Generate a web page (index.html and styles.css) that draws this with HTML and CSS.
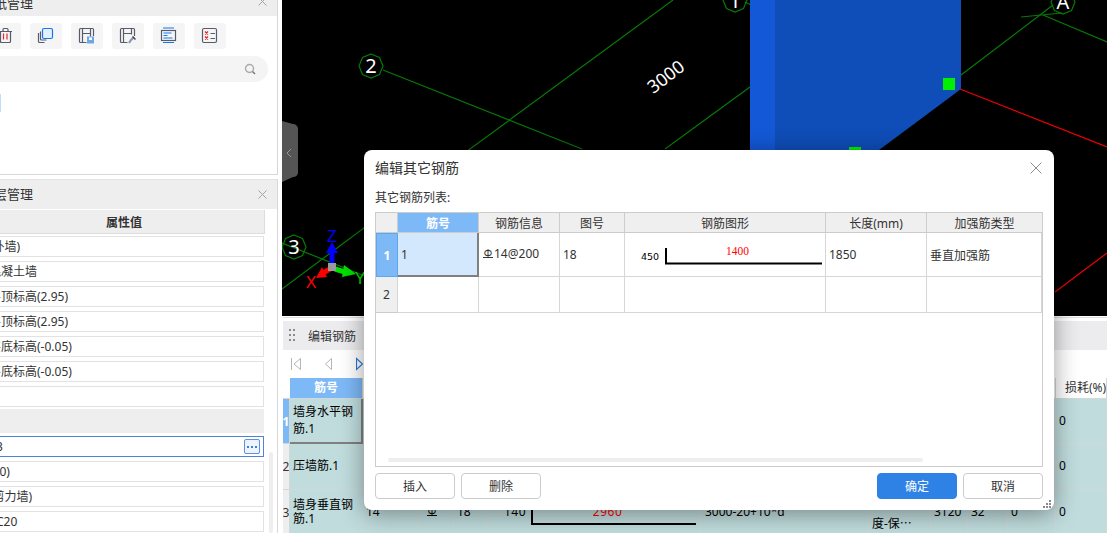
FILE: index.html
```html
<!DOCTYPE html>
<html lang="en">
<head>
    <meta charset="UTF-8">
    <title>编辑其它钢筋</title>
    <link rel="stylesheet" href="styles.css">
</head>
<body>
    <div class="app">
        <div class="side">
            <div class="panel panel-drawings">
                <div class="panel-head">
                    <span class="panel-title">图纸管理</span>
                    <svg class="panel-close" width="9" height="9" viewBox="0 0 9 9"><path d="M.5.500l8 8M8.500.500l-8 8"/></svg>
                </div>
                <div class="tool-row">
                    <div class="tool">
                        <svg width="32" height="26" viewBox="0 0 32 26"><path d="M9 8.500h14M14 8.500V6.500a1 1 0 0 1 1-1h3a1 1 0 0 1 1 1V8.500M11.500 8.500v10a1 1 0 0 0 1 1h8a1 1 0 0 0 1-1v-10" class="ink"/><path d="M14.500 10.500v6M18 10.500v6" class="red"/></svg>
                    </div>
                    <div class="tool">
                        <svg width="32" height="26" viewBox="0 0 32 26"><path d="M8.500 10v8.500a1 1 0 0 0 1 1h5M10.500 8.500v7.500a1 1 0 0 0 1 1h5" class="ink"/><rect x="12.500" y="5.500" width="10" height="10" rx="1.500" class="blue-box"/></svg>
                    </div>
                    <div class="tool">
                        <svg width="32" height="26" viewBox="0 0 32 26"><path d="M15.500 19.500h-6a1 1 0 0 1-1-1v-12a1 1 0 0 1 1-1h12a1 1 0 0 1 1 1V13M11.500 5.500v14M11.500 10.500h8M19.500 5.500v8" class="ink"/><rect x="16" y="13.500" width="7" height="7" fill="#6ea6ea"/><rect x="18" y="14.500" width="3" height="2.500" fill="#fff"/></svg>
                    </div>
                    <div class="tool">
                        <svg width="32" height="26" viewBox="0 0 32 26"><path d="M15.500 19.500h-6a1 1 0 0 1-1-1v-12a1 1 0 0 1 1-1h12a1 1 0 0 1 1 1V13M11.500 5.500v14M11.500 10.500h8M19.500 5.500v6" class="ink"/><path d="M22 14l-3 3-2 3" stroke="#8f98ab" stroke-width="2.200" fill="none"/><path d="M20.500 13.500l3 3" stroke="#444b5c" stroke-width="1.500"/></svg>
                    </div>
                    <div class="tool">
                        <svg width="32" height="26" viewBox="0 0 32 26"><rect x="8.500" y="7.500" width="14" height="10" class="ink"/><path d="M10 5h11M10 19.500h11M10.500 10h8M10.500 12.500h4M10.500 15h9" stroke="#1677ee" fill="none"/></svg>
                    </div>
                    <div class="tool">
                        <svg width="32" height="26" viewBox="0 0 32 26"><rect x="8.500" y="5.500" width="14" height="14" rx="1.500" class="ink"/><path d="M11 8.500l3 3M14 8.500l-3 3M11 13.500l3 3M14 13.500l-3 3" class="red"/><path d="M16.500 10.500h4.500M16.500 15.500h4.500" class="ink"/></svg>
                    </div>
                </div>
                <div class="search">
                    <svg width="12" height="12" viewBox="0 0 12 12"><circle cx="5.500" cy="5.500" r="4" fill="none" stroke="#aaa" stroke-width="1.400"/><path d="M8.500 8.500l2.500 2.500" stroke="#777" stroke-width="1.400"/></svg>
                </div>
                <div class="list-mark"></div>
            </div>

            <div class="panel panel-props">
                <div class="panel-head panel-head-tall">
                    <span class="panel-title">图层管理</span>
                    <svg class="panel-close" width="9" height="9" viewBox="0 0 9 9"><path d="M.5.500l8 8M8.500.500l-8 8"/></svg>
                </div>
                <div class="prop-head">属性值</div>
                <div class="prop-list">
                    <div class="prop"><span class="val">(外墙)</span></div>
                    <div class="prop"><span class="val">混凝土墙</span></div>
                    <div class="prop"><span class="val">层顶标高(2.95)</span></div>
                    <div class="prop"><span class="val">层顶标高(2.95)</span></div>
                    <div class="prop"><span class="val">层底标高(-0.05)</span></div>
                    <div class="prop"><span class="val">层底标高(-0.05)</span></div>
                    <div class="prop"></div>
                    <div class="prop-group"></div>
                    <div class="prop prop-active">
                        <span class="val val-near">3</span>
                        <span class="dots-btn">
                            <svg width="10" height="2" viewBox="0 0 10 2"><path d="M0 0h2v2H0zM4 0h2v2H4zM8 0h2v2H8z"/></svg>
                        </span>
                    </div>
                    <div class="prop"><span class="val">(20)</span></div>
                    <div class="prop"><span class="val">(剪力墙)</span></div>
                    <div class="prop"><span class="val val-near">C20</span></div>
                </div>
                <div class="side-scroll"></div>
            </div>
        </div>

        <div class="main">
            <div class="canvas">
                <svg width="825" height="316" viewBox="282 0 825 316">
                    <defs>
                        <polygon id="bubble" points="0,-12 8.500,-8.500 12,0 8.500,8.500 0,12 -8.500,8.500 -12,0 -8.500,-8.500"/>
                    </defs>
                    <g class="grid-line">
                        <path d="M383 70L582 149M470 149L673 0M665 149L750 87M961 75L1053 5M282 243L420 298M282 289L470 149"/>
                        <path d="M1021 17L1062 13M1043 15L1107 42M745 2L751 5"/>
                        <use href="#bubble" x="371" y="66"/>
                        <use href="#bubble" x="294" y="247"/>
                        <use href="#bubble" x="735" y="0"/>
                        <use href="#bubble" x="1063" y="2"/>
                    </g>
                    <path d="M960 89L1107 147M1055 292L1107 253" class="red-line"/>
                    <polygon points="775,0 961,0 961,89 875,153 775,153" fill="#0f4db8"/>
                    <rect x="750" y="0" width="25" height="153" fill="#1358d6"/>
                    <rect x="943" y="78" width="12" height="12" fill="#00f000"/>
                    <rect x="849" y="147" width="12" height="12" fill="#00f000"/>
                    <text x="371" y="73" class="bubble-text">2</text>
                    <text x="294" y="254" class="bubble-text">3</text>
                    <text x="735" y="8" class="bubble-text">1</text>
                    <text x="1063" y="9" class="bubble-text">A</text>
                    <text x="666" y="83" class="dim-text" transform="rotate(-37 666 77)">3000</text>
                    <path d="M282 121l11 3a5 5 0 0 1 5 5v44a5 5 0 0 1-5 4l-11 5z" fill="#555"/>
                    <path d="M291 149l-4 4 4 4" fill="none" stroke="#999"/>
                    <path d="M332 265v-15" stroke="#0000ff" stroke-width="5"/>
                    <polygon points="332,242 338,253 326,253" fill="#0000ff"/>
                    <path d="M330 269l-7 4" stroke="#ff0000" stroke-width="5"/>
                    <polygon points="316,278 322,267 327,277" fill="#ff0000"/>
                    <path d="M335 269l10 3" stroke="#00e000" stroke-width="5"/>
                    <polygon points="356,274 344,265 342,277" fill="#00e000"/>
                    <rect x="328" y="263" width="8" height="8" fill="#999"/>
                    <text x="332" y="242" class="axis-text" fill="#0000ff">Z</text>
                    <text x="311" y="288" class="axis-text" fill="#ff0000">X</text>
                    <text x="360" y="284" class="axis-text" fill="#00e000">Y</text>
                </svg>
            </div>

            <div class="rebar-panel">
                <div class="rebar-head">
                    <svg width="6" height="13" viewBox="0 0 6 13"><path d="M0 0h2v2H0zM4 0h2v2H4zM0 5h2v2H0zM4 5h2v2H4zM0 10h2v2H0zM4 10h2v2H4z" fill="#8a8a8a"/></svg>
                    <span>编辑钢筋</span>
                </div>
                <div class="rebar-tools">
                    <svg width="10" height="14" viewBox="0 0 10 14"><path d="M.5 1v12M9.500 1.500L3 7l6.500 5.500z" fill="none" stroke="#b5b5b5"/></svg>
                    <svg width="7" height="14" viewBox="0 0 7 14"><path d="M6.500 1.500L.5 7l6 5.500z" fill="none" stroke="#b5b5b5"/></svg>
                    <svg width="7" height="14" viewBox="0 0 7 14"><path d="M.5 1.500L6.500 7l-6 5.500z" fill="none" stroke="#2a78d8" stroke-width="1.200"/></svg>
                </div>
                <div class="rebar-table">
                    <div class="rc rh"></div>
                    <div class="rc rh rh-sel">筋号</div>
                    <div class="rc rh"></div>
                    <div class="rc rh"></div>
                    <div class="rc rh"></div>
                    <div class="rc rh"></div>
                    <div class="rc rh"></div>
                    <div class="rc rh"></div>
                    <div class="rc rh"></div>
                    <div class="rc rh"></div>
                    <div class="rc rh"></div>
                    <div class="rc rh">损耗(%)</div>

                    <div class="rc rn rn-sel">1</div>
                    <div class="rc rd rd-sel">墙身水平钢筋.1</div>
                    <div class="rc rd"></div>
                    <div class="rc rd"></div>
                    <div class="rc rd"></div>
                    <div class="rc rd"></div>
                    <div class="rc rd"></div>
                    <div class="rc rd"></div>
                    <div class="rc rd"></div>
                    <div class="rc rd"></div>
                    <div class="rc rd"></div>
                    <div class="rc rd">0</div>

                    <div class="rc rn">2</div>
                    <div class="rc rd">压墙筋.1</div>
                    <div class="rc rd"></div>
                    <div class="rc rd"></div>
                    <div class="rc rd"></div>
                    <div class="rc rd"></div>
                    <div class="rc rd"></div>
                    <div class="rc rd"></div>
                    <div class="rc rd"></div>
                    <div class="rc rd"></div>
                    <div class="rc rd"></div>
                    <div class="rc rd">0</div>

                    <div class="rc rn">3</div>
                    <div class="rc rd rd-tight">墙身垂直钢筋.1</div>
                    <div class="rc rd">14</div>
                    <div class="rc rd rd-grade"><span class="grade">Φ</span></div>
                    <div class="rc rd">18</div>
                    <div class="rc rd rd-shape">
                        <span>140</span>
                        <span class="rd-bar"><span class="rd-red">2960</span></span>
                    </div>
                    <div class="rc rd rd-formula">3000-20+10*d</div>
                    <div class="rc rd rd-loose">墙净高长度-保⋯</div>
                    <div class="rc rd">3120</div>
                    <div class="rc rd">32</div>
                    <div class="rc rd">0</div>
                    <div class="rc rd">0</div>
                </div>
            </div>
        </div>
    </div>

    <div class="dialog">
        <div class="dialog-head">
            <span class="dialog-title">编辑其它钢筋</span>
            <svg width="12" height="12" viewBox="0 0 12 12"><path d="M.5.500l11 11M11.500.500l-11 11" stroke="#8c8c8c" fill="none"/></svg>
        </div>
        <div class="dialog-label">其它钢筋列表:</div>
        <div class="bars">
            <div class="bars-grid">
                <div class="th"></div>
                <div class="th th-sel">筋号</div>
                <div class="th">钢筋信息</div>
                <div class="th">图号</div>
                <div class="th">钢筋图形</div>
                <div class="th">长度(mm)</div>
                <div class="th th-last">加强筋类型</div>

                <div class="td td-no td-no-sel">1</div>
                <div class="td td-sel">1</div>
                <div class="td td-info"><span class="grade">Φ</span>14@200</div>
                <div class="td">18</div>
                <div class="td td-shape">
                    <svg width="200" height="43" viewBox="0 0 200 43">
                        <text x="16" y="27" class="shape-num">450</text>
                        <path d="M41 15v15.500h156" fill="none" stroke="#000" stroke-width="2"/>
                        <text x="101" y="22" class="shape-len" fill="#ff0000">1400</text>
                    </svg>
                </div>
                <div class="td">1850</div>
                <div class="td th-last">垂直加强筋</div>

                <div class="td td-no td-low">2</div>
                <div class="td td-low"></div>
                <div class="td td-low"></div>
                <div class="td td-low"></div>
                <div class="td td-low"></div>
                <div class="td td-low"></div>
                <div class="td td-low th-last"></div>
            </div>
            <div class="bars-scroll"></div>
        </div>
        <div class="dialog-foot">
            <button class="btn">插入</button>
            <button class="btn">删除</button>
            <button class="btn btn-primary">确定</button>
            <button class="btn">取消</button>
        </div>
        <svg class="grip" width="8" height="8" viewBox="0 0 8 8"><path d="M6 0h2v2H6zM3 3h2v2H3zM6 3h2v2H6zM0 6h2v2H0zM3 6h2v2H3zM6 6h2v2H6z" fill="#8a8a8a"/></svg>
    </div>
</body>
</html>
```

FILE: styles.css
```css
* {
    box-sizing: border-box;
}

html, body {
    margin: 0;
    padding: 0;
    height: 100%;
    overflow: hidden;
}

body {
    font-family: "Noto Sans", "Noto Sans CJK SC", sans-serif;
    font-size: 12px;
    color: #333;
    background-color: #fff;
}

.app {
    display: flex;
    height: 100vh;
}

/* left column */
.side {
    width: 278px;
    margin-right: 4px;
    flex-shrink: 0;
    display: flex;
    flex-direction: column;
}

.panel {
    border-right: 1px solid #d8d8d8;
    position: relative;
    overflow: hidden;
}

.panel-drawings {
    height: 175px;
    border-bottom: 1px solid #d8d8d8;
}

.panel-props {
    flex: 1;
    margin-top: 4px;
    border-top: 1px solid #e2e2e2;
}

.panel-head {
    height: 16px;
    background-color: #eeeeef;
    display: flex;
    align-items: flex-start;
    justify-content: space-between;
    padding-right: 10px;
    line-height: 16px;
}

.panel-head .panel-title {
    margin-top: -5px;
}

.panel-head .panel-close {
    margin-top: -3px;
}

.panel-head-tall {
    height: 29px;
    align-items: center;
    padding-bottom: 1px;
}

.panel-head-tall .panel-title,
.panel-head-tall .panel-close {
    margin-top: 0;
}

.panel-title {
    margin-left: -19px;
    font-size: 13px;
}

.panel-close path {
    stroke: #a5a5a5;
    fill: none;
}

.tool-row {
    display: flex;
    gap: 9px;
    margin: 7px 0 0 -11px;
}

.tool {
    width: 32px;
    height: 26px;
    background-color: #f5f5f6;
    border-radius: 3px;
}

.tool svg {
    display: block;
}

.ink {
    fill: none;
    stroke: #565c6b;
    stroke-width: 1.200;
}

.red {
    fill: none;
    stroke: #e8212b;
    stroke-width: 1.200;
}

.blue-box {
    fill: #e3f0ff;
    stroke: #1677ee;
    stroke-width: 1.200;
}

.search {
    height: 26px;
    width: 268px;
    margin-top: 7px;
    background-color: #f4f4f5;
    border-radius: 0 13px 13px 0;
    display: flex;
    align-items: center;
    justify-content: flex-end;
    padding-right: 12px;
}

.list-mark {
    width: 1px;
    height: 18px;
    margin-top: 12px;
    background-color: #bfdcfb;
}

.prop-head {
    width: 265px;
    height: 24px;
    margin-top: 1px;
    padding-right: 16px;
    background-color: #eee;
    border-right: 1px solid #ddd;
    border-bottom: 1px solid #ddd;
    text-align: center;
    line-height: 25px;
    font-weight: 700;
}

.prop-list {
    width: 264px;
    margin-top: 2px;
    display: flex;
    flex-direction: column;
    gap: 4px;
}

.prop {
    height: 21px;
    margin-left: -2px;
    border: 1px solid #e2e2e2;
    display: flex;
    align-items: center;
    justify-content: space-between;
    padding: 0 3px 1px 0;
    white-space: nowrap;
    flex-shrink: 0;
}

.val {
    margin-left: -10px;
}

.val-near {
    margin-left: -3px;
}

.prop-group {
    height: 24px;
    margin: -2px 0 -1px;
    background-color: #eee;
    flex-shrink: 0;
}

.prop-active {
    border-color: #4f83d8;
}

.dots-btn {
    width: 16px;
    height: 15px;
    margin-top: 1px;
    border: 1px solid #5a94e0;
    border-radius: 2px;
    background-color: #eef4fd;
    display: flex;
    align-items: center;
    justify-content: center;
}

.dots-btn svg {
    fill: #3b7fdc;
}

.side-scroll {
    position: absolute;
    left: 269px;
    top: 272px;
    bottom: 0;
    width: 4px;
    background-color: #eee;
    border-radius: 2px;
}

/* drawing area */
.main {
    flex: 1;
    min-width: 0;
    display: flex;
    flex-direction: column;
}

.canvas {
    height: 316px;
    background-color: #000;
    flex-shrink: 0;
}

.canvas svg {
    display: block;
}

.grid-line {
    fill: none;
    stroke: #067a06;
    stroke-width: 1.200;
}

.red-line {
    fill: none;
    stroke: #f00000;
    stroke-width: 1.200;
}

.bubble-text {
    font-size: 20px;
    fill: #fff;
    text-anchor: middle;
}

.dim-text {
    font-size: 18px;
    fill: #fff;
    text-anchor: middle;
}

.axis-text {
    font-size: 16px;
    text-anchor: middle;
    font-family: "Liberation Sans", sans-serif;
}

/* rebar table under the dialog */
.rebar-panel {
    flex: 1;
    margin: 1px 0 0 1px;
    padding-top: 3px;
    border-top: 1px solid #e0e0e0;
    overflow: hidden;
}

.rebar-head {
    height: 29px;
    background-color: #ececee;
    display: flex;
    align-items: center;
    gap: 13px;
    padding-left: 6px;
}

.rebar-tools {
    height: 28px;
    display: flex;
    align-items: center;
    gap: 24px;
    padding: 0 0 1px 8px;
}

.rebar-table {
    display: grid;
    grid-template-columns: 7px 73px 55px 36px 33px 213px 169px 62px 37px 40px 48px 1fr;
    grid-template-rows: 21px 45px 46px 46px;
}

.rc {
    border-right: 1px solid #d0d8d8;
    border-bottom: 1px solid #d0d8d8;
    overflow: hidden;
}

.rh {
    background-color: #fff;
    text-align: left;
    line-height: 19px;
    white-space: nowrap;
    padding-left: 9px;
}

.rh-sel {
    background-color: #7eb9f7;
    color: #fff;
    font-weight: 700;
    text-align: center;
    padding-left: 0;
}

.rn {
    background-color: #eee;
    text-align: center;
    display: flex;
    align-items: center;
    justify-content: center;
}

.rn-sel {
    background-color: #7eb9f7;
    color: #fff;
    font-weight: 700;
}

.rd {
    background-color: #c0dcdd;
    color: #000;
    padding: 0 3px 2px;
    display: flex;
    align-items: center;
    line-height: 17px;
}

.rd-sel {
    padding-bottom: 1px;
    border-right: 2px solid #808080;
    border-bottom: 2px solid #808080;
}

.rd-tight {
    padding-bottom: 1px;
    line-height: 14px;
}

.rd-loose {
    line-height: 24px;
    white-space: normal;
}

.rd-grade {
    padding-left: 9px;
}

.rd-formula {
    padding-left: 5px;
}

.rd-shape {
    gap: 5px;
    padding-left: 17px;
    letter-spacing: 0.5px;
}

.rd-bar {
    flex: 1;
    height: 20px;
    margin-top: 6px;
    padding-right: 14px;
    border-left: 2px solid #000;
    border-bottom: 2px solid #000;
    text-align: center;
    line-height: 14px;
}

.rd-red {
    color: #f00;
}

/* dialog */
.dialog {
    position: absolute;
    left: 364px;
    top: 150px;
    width: 690px;
    height: 360px;
    background-color: #fff;
    border-radius: 8px;
    box-shadow: 0 4px 24px rgba(0, 0, 0, 0.4);
    padding: 0 11px;
}

.dialog-head {
    height: 38px;
    display: flex;
    align-items: center;
    justify-content: space-between;
    padding: 0 1px 3px 0;
    font-size: 14px;
}

.dialog-title {
    margin-bottom: 2px;
}

.dialog-label {
    height: 24px;
    line-height: 20px;
}

.bars {
    width: 668px;
    height: 255px;
    border: 1px solid #ccc;
    position: relative;
}

.bars-grid {
    display: grid;
    grid-template-columns: 22px 81px 81px 65px 201px 101px 115px;
    grid-template-rows: 20px 44px 36px;
}

.th {
    background-color: #efefef;
    border-right: 1px solid #ccc;
    border-bottom: 1px solid #ccc;
    text-align: center;
    line-height: 21px;
}

.th-sel {
    background-color: #7eb9f7;
    color: #fff;
    font-weight: 700;
}

.th-last {
    border-right: none;
}

.td {
    border-right: 1px solid #d6d6d6;
    border-bottom: 1px solid #d6d6d6;
    display: flex;
    align-items: center;
    padding-left: 3px;
}

.td-low {
    padding: 0;
}

.td-no {
    background-color: #efefef;
    justify-content: center;
    padding: 0;
    border-bottom-color: #ccc;
}

.td-no-sel {
    background-color: #7eb9f7;
    color: #fff;
    font-weight: 700;
    border: 1px solid #5fa6f0;
}

.td-sel {
    background-color: #d3e8fd;
    border-right: 2px solid #808080;
    border-bottom: 2px solid #808080;
}

.td-info {
    padding: 0 0 3px 4px;
}

/* steel grade mark: phi sitting on a base line */
.grade {
    display: inline-block;
    width: 10px;
    height: 9px;
    margin-right: 1px;
    border-bottom: 1px solid #333;
    font-size: 10px;
    line-height: 8px;
    text-align: center;
}

.rd-grade .grade {
    border-bottom-color: #000;
}

.td-shape {
    padding: 0;
}

.td-shape svg {
    display: block;
}

.shape-num {
    font-family: "DejaVu Sans", sans-serif;
    font-size: 9.500px;
}

.shape-len {
    font-family: "Liberation Serif", serif;
    font-size: 11.500px;
}

.bars-scroll {
    position: absolute;
    left: 12px;
    right: 119px;
    top: 245px;
    height: 4px;
    background-color: #eee;
    border-radius: 2px;
}

.dialog-foot {
    display: flex;
    gap: 6px;
    margin-top: 6px;
}

.btn {
    width: 80px;
    height: 26px;
    padding: 0;
    background-color: #fff;
    border: 1px solid #ccc;
    border-radius: 4px;
    font-family: inherit;
    font-size: 12px;
    color: #333;
}

.btn-primary {
    margin-left: auto;
    background-color: #2e82e6;
    border-color: #2e82e6;
    color: #fff;
}

.grip {
    position: absolute;
    right: 3px;
    bottom: 2px;
}
```
